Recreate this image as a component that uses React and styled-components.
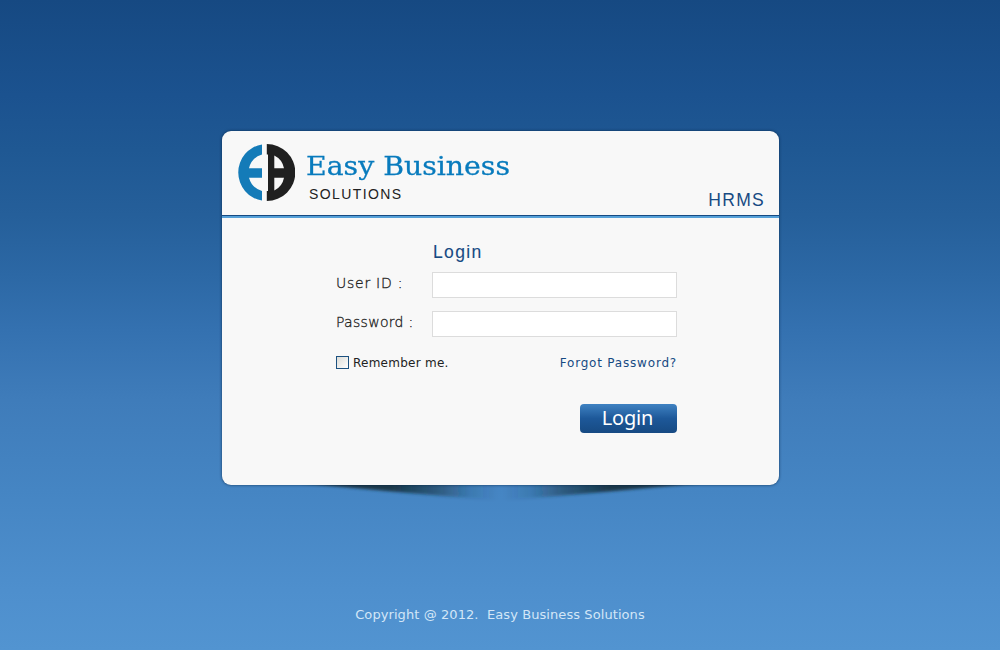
import React from 'react';
import styled, { createGlobalStyle } from 'styled-components';

const GlobalStyle = createGlobalStyle`
  * { box-sizing: border-box; }
  body { margin: 0; font-family: "DejaVu Sans", Verdana, sans-serif; }
`;

const Page = styled.div`
  display: flex;
  flex-direction: column;
  align-items: center;
  width: 1000px;
  height: 650px;
  padding: 131px 0 0 1px;
  background: linear-gradient(
    #164982 0, #1b528f 95px, #1f5893 150px, #255f9a 215px, #2c68a5 275px,
    #3471b0 330px, #3f7cba 400px, #4585c3 490px, #4e8fcd 590px, #5294d1 650px
  );
`;

const Card = styled.main`
  position: relative;
  z-index: 1;
  width: 557px;
  height: 354px;
  border-radius: 9px;
  background: #f8f8f8;
  box-shadow: 0 0 3px rgba(0, 30, 60, 0.75);
`;

const CardHeader = styled.header`
  display: flex;
  justify-content: space-between;
  height: 87px;
  padding: 13px 14px 0 16px;
  border-bottom: 2px solid #55a0d8;
  box-shadow: inset 0 -1px 0 #164a83;
`;

const Brand = styled.div`
  display: flex;
  gap: 11px;
`;

const BrandText = styled.div`
  display: flex;
  flex-direction: column;
  padding-top: 4px;
`;

const BrandName = styled.span`
  font: 26px/36px "DejaVu Serif", serif;
  letter-spacing: 0;
  transform: scaleX(1.09);
  transform-origin: left;
  -webkit-text-stroke: 0.3px #087bbd;
  color: #087bbd;
  white-space: nowrap;
`;

const BrandTag = styled.span`
  padding-left: 3px;
  font: 14px/20px "Liberation Sans", Arial, sans-serif;
  letter-spacing: 1.4px;
  color: #222;
`;

const Product = styled.span`
  align-self: flex-end;
  margin-bottom: 5px;
  font: 17.5px/22px "Liberation Sans", Arial, sans-serif;
  letter-spacing: 1.3px;
  color: #164a83;
`;

const Form = styled.form`
  width: 341px;
  margin-left: 114px;
  padding-top: 23px;
`;

const Title = styled.h1`
  margin: 0 0 9px 97px;
  font: 17.5px/22px "Liberation Sans", Arial, sans-serif;
  letter-spacing: 1.35px;
  -webkit-text-stroke: 0.1px #164a83;
  color: #164a83;
`;

const Field = styled.label`
  display: flex;
  justify-content: space-between;
  height: 26px;
  margin-bottom: 13px;
`;

const FieldLabel = styled.span`
  font-size: 14px;
  line-height: 22px;
  font-weight: 200;
  letter-spacing: ${(p) => p.$tracking};
  -webkit-text-stroke: 0.3px #222;
  color: #222;
  white-space: nowrap;
`;

const Input = styled.input`
  width: 245px;
  height: 26px;
  border: 1px solid #dcdcdc;
  background: #fff;
  outline: none;
`;

const Options = styled.div`
  display: flex;
  justify-content: space-between;
  margin-top: 17px;
  font-size: 12px;
  line-height: 18px;
  white-space: nowrap;
`;

const Remember = styled.label`
  display: flex;
  align-items: center;
  gap: 4px;
  letter-spacing: 0.25px;
  color: #222;
`;

const Checkbox = styled.input`
  appearance: none;
  width: 13px;
  height: 13px;
  margin: 0 0 1px;
  border: 1px solid #1c5180;
  background: linear-gradient(135deg, #dcdcd7, #fff);
`;

const Forgot = styled.a`
  letter-spacing: 0.8px;
  color: #164a83;
`;

const Submit = styled.button`
  display: block;
  width: 97px;
  height: 29px;
  margin: 32px 0 0 auto;
  padding: 0 2px 2px 0;
  border: 0;
  border-radius: 4px;
  background: linear-gradient(#3f82c2, #1d5899 50%, #174a83);
  color: #fff;
  font: 20px/27px "Noto Sans", sans-serif;
  letter-spacing: -0.2px;
`;

const Shadow = styled.svg`
  display: block;
  width: 557px;
  height: 26px;
`;

const Footer = styled.footer`
  margin-top: 94px;
  padding-right: 1px;
  font-size: 13px;
  line-height: 20px;
  letter-spacing: 0.08px;
  color: #d3e6f7;
  white-space: pre;
`;

const Logo = () => (
  <svg width="57" height="57" viewBox="0 0 57 57" aria-hidden="true">
    <path fill="#147bb8" d="M24 0.4A28.5 28.5 0 0 0 24 56.6V47A19 19 0 0 1 11 33.7H24V24.3H11A19 19 0 0 1 24 10.5Z" />
    <path fill="#202020" fillRule="evenodd" d="M28.8 0A28.5 28.5 0 0 1 28.8 57V47H30V10.5H28.8ZM36.3 11.5V24.3H46A18 18 0 0 0 36.3 11.5ZM36.3 33.7V46.5A18 18 0 0 0 46 33.7Z" />
  </svg>
);

const CardShadow = () => (
  <Shadow viewBox="0 0 557 26" aria-hidden="true">
    <defs>
      <linearGradient id="fade">
        <stop offset="0" stopColor="#14303d" stopOpacity="0.9" />
        <stop offset="0.46" stopColor="#14303d" stopOpacity="0.9" />
        <stop offset="0.7" stopColor="#14303d" stopOpacity="0.5" />
        <stop offset="0.86" stopColor="#14303d" stopOpacity="0.14" />
        <stop offset="1" stopColor="#14303d" stopOpacity="0" />
      </linearGradient>
      <filter id="soft" x="-10%" y="-50%" width="120%" height="200%">
        <feGaussianBlur stdDeviation="1.6" />
      </filter>
      <path id="wedge" d="M80 -4H275V15Q190 9 80 -2Z" fill="url(#fade)" filter="url(#soft)" />
    </defs>
    <use href="#wedge" />
    <use href="#wedge" transform="translate(557 0) scale(-1 1)" />
  </Shadow>
);

export default function App() {
  return (
    <>
      <GlobalStyle />
      <Page>
        <Card>
          <CardHeader>
            <Brand>
              <Logo />
              <BrandText>
                <BrandName>Easy Business</BrandName>
                <BrandTag>SOLUTIONS</BrandTag>
              </BrandText>
            </Brand>
            <Product>HRMS</Product>
          </CardHeader>
          <Form onSubmit={(e) => e.preventDefault()}>
            <Title>Login</Title>
            <Field>
              <FieldLabel $tracking="0.75px">User ID :</FieldLabel>
              <Input type="text" />
            </Field>
            <Field>
              <FieldLabel $tracking="0.3px">Password :</FieldLabel>
              <Input type="password" />
            </Field>
            <Options>
              <Remember>
                <Checkbox type="checkbox" />
                Remember me.
              </Remember>
              <Forgot>Forgot Password?</Forgot>
            </Options>
            <Submit type="submit">Login</Submit>
          </Form>
        </Card>
        <CardShadow />
        <Footer>{'Copyright @ 2012.  Easy Business Solutions'}</Footer>
      </Page>
    </>
  );
}
